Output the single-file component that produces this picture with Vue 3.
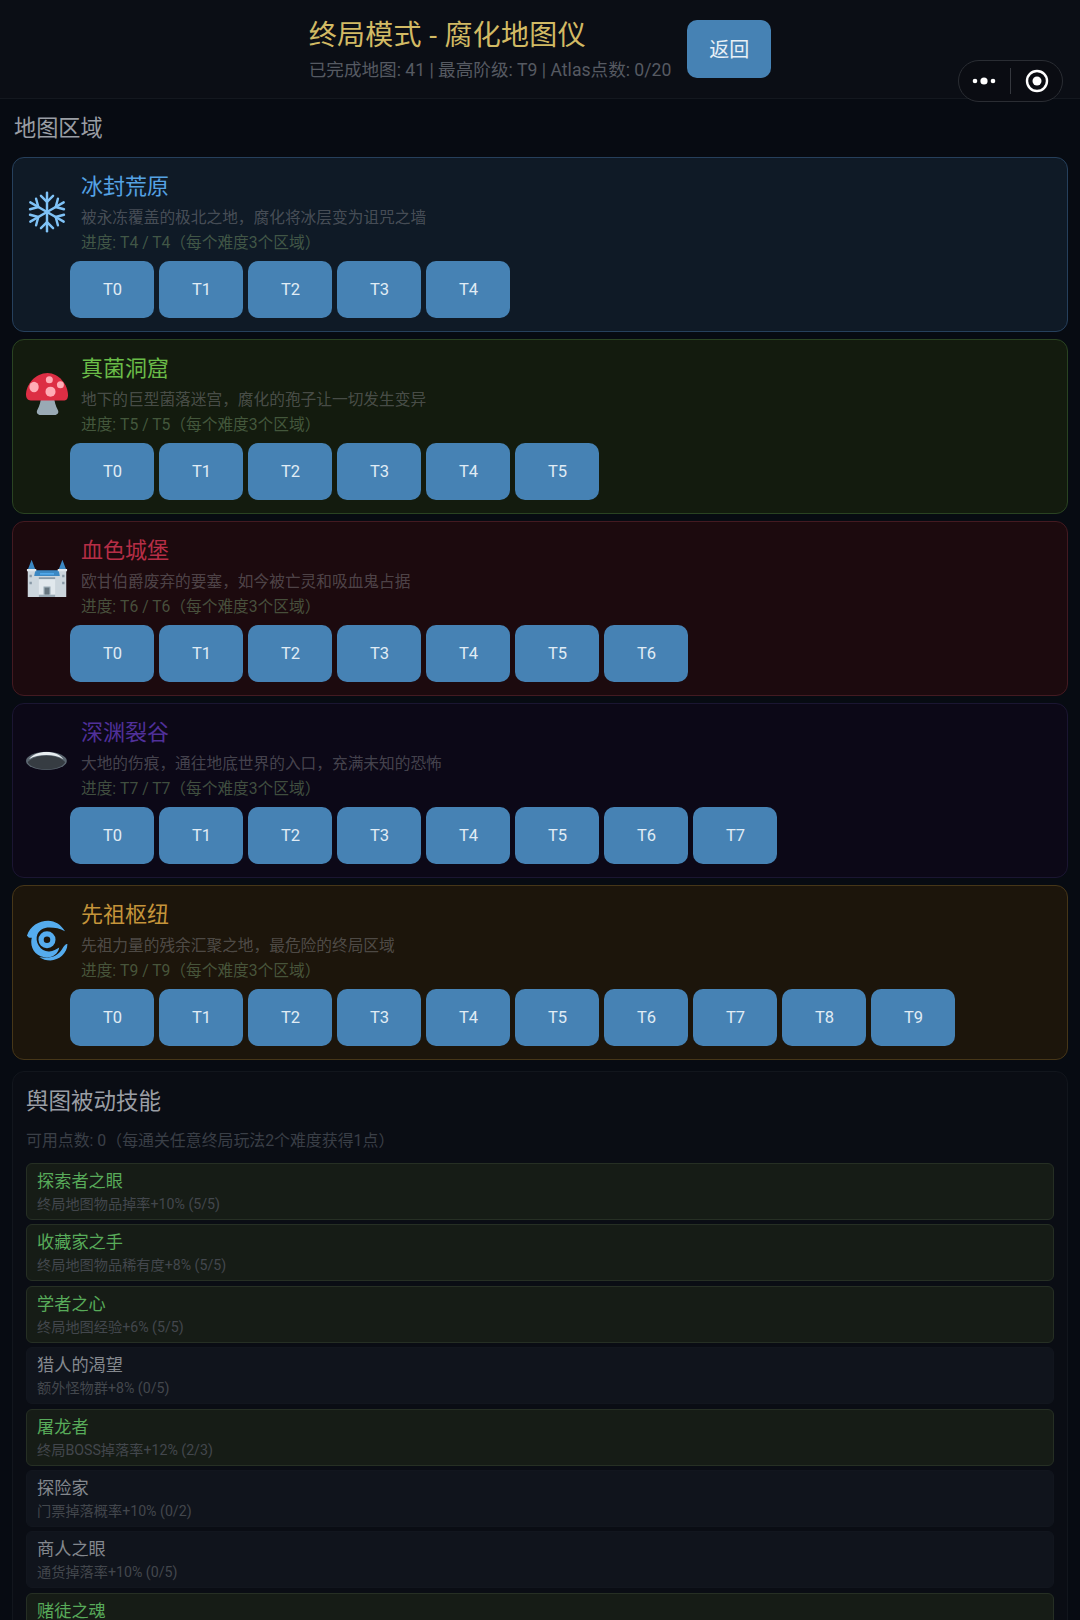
<script setup>
const regions = [
  { key: 'ice', icon: 'snow', name: '冰封荒原', desc: '被永冻覆盖的极北之地，腐化将冰层变为诅咒之墙', tier: 4 },
  { key: 'fungus', icon: 'mushroom', name: '真菌洞窟', desc: '地下的巨型菌落迷宫，腐化的孢子让一切发生变异', tier: 5 },
  { key: 'blood', icon: 'castle', name: '血色城堡', desc: '欧甘伯爵废弃的要塞，如今被亡灵和吸血鬼占据', tier: 6 },
  { key: 'abyss', icon: 'hole', name: '深渊裂谷', desc: '大地的伤痕，通往地底世界的入口，充满未知的恐怖', tier: 7 },
  { key: 'nexus', icon: 'cyclone', name: '先祖枢纽', desc: '先祖力量的残余汇聚之地，最危险的终局区域', tier: 9 },
]
const skills = [
  { name: '探索者之眼', desc: '终局地图物品掉率+10% (5/5)', on: true },
  { name: '收藏家之手', desc: '终局地图物品稀有度+8% (5/5)', on: true },
  { name: '学者之心', desc: '终局地图经验+6% (5/5)', on: true },
  { name: '猎人的渴望', desc: '额外怪物群+8% (0/5)', on: false },
  { name: '屠龙者', desc: '终局BOSS掉落率+12% (2/3)', on: true },
  { name: '探险家', desc: '门票掉落概率+10% (0/2)', on: false },
  { name: '商人之眼', desc: '通货掉落率+10% (0/5)', on: false },
  { name: '赌徒之魂', desc: '腐化奖励概率+5% (1/5)', on: true },
]
const tiers = (n) => Array.from({ length: n + 1 }, (_, i) => 'T' + i)
</script>

<template>
  <div class="page">
    <header class="top">
      <div class="top-text">
        <div class="title">终局模式 - 腐化地图仪</div>
        <div class="sub">已完成地图: 41 | 最高阶级: T9 | Atlas点数: 0/20</div>
      </div>
      <button class="back">返回</button>
      <div class="capsule">
        <svg class="dots" viewBox="0 0 24 10" width="24" height="10">
          <circle cx="3" cy="5" r="2.3" fill="#fff" />
          <circle cx="12" cy="5" r="3.6" fill="#fff" />
          <circle cx="21" cy="5" r="2.3" fill="#fff" />
        </svg>
        <span class="cap-line"></span>
        <svg viewBox="0 0 24 24" width="24" height="24">
          <circle cx="12" cy="12" r="10" fill="none" stroke="#fff" stroke-width="2.4" />
          <circle cx="12" cy="12" r="4.5" fill="#fff" />
        </svg>
      </div>
    </header>

    <main class="content">
      <h2 class="section">地图区域</h2>
      <div class="regions">
        <section v-for="r in regions" :key="r.key" class="card" :class="r.key">
          <div class="card-head">
            <div class="icon">
              <svg v-if="r.icon === 'snow'" viewBox="0 0 36 36" width="42" height="42" fill="none" stroke="#7fc2f6" stroke-width="2.1" stroke-linecap="round" stroke-linejoin="round">
                <g v-for="a in [0, 60, 120, 180, 240, 300]" :key="a" :transform="`rotate(${a} 18 18)`">
                  <path d="M18 18V1.500" />
                  <path d="M12.800 4.200 18 9.400l5.200-5.200" />
                </g>
              </svg>
              <svg v-else-if="r.icon === 'mushroom'" viewBox="0 0 36 36" width="42" height="42">
                <path fill="#99aab5" d="M13 20h11c.3 4.500 1.400 8.500 3.200 11.500C28.600 34 27 36 24.500 36h-12c-2.500 0-4.100-2-2.700-4.500C11.600 28.500 12.700 24.500 13 20z" />
                <path fill="#dd2e44" d="M18.500 0C8 0 0 10 0 18.500 0 21.500 1.500 23.500 4 23.500h29c2 0 3-2 3-4.500C36 10 28 0 18.500 0z" />
                <ellipse cx="6.900" cy="12" rx="4" ry="4.400" fill="#ffacb6" />
                <circle cx="20" cy="5.700" r="3" fill="#ffacb6" />
                <circle cx="21" cy="16" r="4.300" fill="#ffacb6" />
                <circle cx="29.500" cy="10" r="3" fill="#ffacb6" />
              </svg>
              <svg v-else-if="r.icon === 'castle'" viewBox="0 0 36 36" width="42" height="42">
                <path fill="#ccd6dd" d="M1.500 13h7v23h-7zM27.500 13h7v23h-7zM8 16h20v20H8z" />
                <path fill="#e1e8ed" d="M11 21h14v15H11z" />
                <path fill="#3b88c3" d="M4.800 4 8 12.500H1.600zM31.200 4 34.400 12.500H28zM8 13h20l1 5H7z" />
                <path fill="#e1e8ed" d="M.8 12h8v2H.8zM27.200 12h8v2h-8z" />
                <path fill="#99aab5" d="M15 27h6v7h-6z" />
                <path fill="#66757f" d="M16 28h4v6h-4z" />
                <path fill="#55acee" d="M12 15.500h12v1.300H12z" />
                <path fill="#8899a6" d="M3 17h2v2H3zM31 17h2v2h-2zM3 23h2v2H3zM31 23h2v2h-2zM11 19h14v1.500H11z" />
                <path fill="#99aab5" d="M11 34h14v2H11z" />
              </svg>
              <svg v-else-if="r.icon === 'hole'" viewBox="0 0 36 36" width="42" height="42">
                <ellipse cx="17.500" cy="20.500" rx="17.500" ry="7.800" fill="#5b6670" />
                <path fill="#363c42" d="M1.500 21.500C5 17.500 11 16 17.500 16s12.500 1.500 16 5.500c-1 3.800-8.500 6.300-16 6.300S2.500 25.300 1.500 21.500z" />
                <path fill="#e8edf0" d="M2.500 19C6 15 11 12.900 17.500 12.900S29 15 32 19c-4-2.400-9-3.500-14.500-3.500S6.500 16.600 2.500 19z" />
              </svg>
              <svg v-else viewBox="0 0 36 36" width="42" height="42">
                <path fill="#55acee" d="M.8 14.300C3.500 6 11 1.500 19 1.500c6 0 11 3.500 14.500 9-4.500-2.500-8.500-3.300-13.500-3.300-5 0-8.500 2.300-10.200 5.800-1.300 3-.8 7 1.200 10 2 3.500 5.500 5 9 4.800 3.500-.2 6-1.800 8.500-3.300-1 5.500-5.500 8.500-10.500 8.500-8 0-13.500-6-13.500-13 0-1.500.2-3 .5-4-1.500.2-3 .2-3.200-.7z" />
                <path fill="#55acee" d="M35.500 21.500c0 8-7.500 14-14.500 14-3.500 0-7-1-9.500-3 3 .5 5.500.7 8 .5 5.500-.5 10-4 12.500-9 1-1.500 2.500-3 3.500-2.500z" />
                <path fill="#55acee" fill-rule="evenodd" d="M18 10.500a7.300 7.300 0 1 0 0 14.600 7.300 7.300 0 0 0 0-14.600zm0 4.500a2.800 2.800 0 1 1 0 5.600 2.800 2.800 0 0 1 0-5.600z" />
              </svg>
            </div>
            <div class="info">
              <div class="name">{{ r.name }}</div>
              <div class="desc">{{ r.desc }}</div>
              <div class="progress">进度: T{{ r.tier }} / T{{ r.tier }}（每个难度3个区域）</div>
            </div>
          </div>
          <div class="tiers">
            <button v-for="t in tiers(r.tier)" :key="t" class="tier">{{ t }}</button>
          </div>
        </section>
      </div>

      <section class="passive">
        <h3 class="passive-title">舆图被动技能</h3>
        <div class="points">可用点数: 0（每通关任意终局玩法2个难度获得1点）</div>
        <div class="skills">
          <div v-for="s in skills" :key="s.name" class="skill" :class="{ on: s.on }">
            <div class="skill-name">{{ s.name }}</div>
            <div class="skill-desc">{{ s.desc }}</div>
          </div>
        </div>
      </section>
    </main>
  </div>
</template>

<style scoped>
.page {
  position: relative;
  width: 1080px;
  height: 1620px;
  overflow: hidden;
  background: #070b12;
  font-family: Roboto, "Noto Sans CJK SC", sans-serif;
  color: #c0c4ca;
}
.top {
  height: 97px;
  border-bottom: 1px solid #14181f;
  background: #0b0e15;
  display: flex;
  justify-content: center;
  align-items: center;
  gap: 16px;
  padding-bottom: 1px;
  box-sizing: content-box;
}
.top-text {
  padding-top: 3px;
}
.title {
  font-size: 28px;
  line-height: 36px;
  color: #d2ba64;
  letter-spacing: 0.3px;
}
.sub {
  margin-top: 4px;
  font-size: 17.600px;
  line-height: 24px;
  color: #565a62;
}
.back {
  width: 84px;
  height: 58px;
  border: 0;
  border-radius: 10px;
  background: #4682b4;
  color: #e8f0f6;
  font: inherit;
  font-size: 20px;
  padding: 0;
}
.capsule {
  position: absolute;
  left: 958px;
  top: 60px;
  width: 105px;
  height: 42px;
  box-sizing: border-box;
  border: 1.500px solid #2a2d33;
  border-radius: 21px;
  background: #0a0c12;
  display: flex;
  align-items: center;
  justify-content: center;
  gap: 14px;
}
.cap-line {
  width: 1px;
  height: 26px;
  background: #35383e;
}
.content {
  padding: 0 12px;
}
.section {
  margin: 0;
  padding-left: 2px;
  height: 58px;
  font-size: 22.200px;
  font-weight: 400;
  line-height: 58px;
  color: #9a9ea4;
}
.regions {
  display: flex;
  flex-direction: column;
  gap: 7px;
}
.card {
  height: 175px;
  box-sizing: border-box;
  border: 1px solid;
  border-radius: 12px;
  padding: 14px 13px 13px;
  display: flex;
  flex-direction: column;
  justify-content: space-between;
}
.card-head {
  display: flex;
  align-items: center;
  gap: 13px;
}
.icon {
  width: 42px;
  height: 42px;
  flex: none;
  margin-bottom: 3px;
}
.icon svg { display: block; }
.name {
  font-size: 22px;
  line-height: 30px;
}
.desc {
  margin-top: 4px;
  font-size: 15.700px;
  line-height: 24px;
  color: rgba(160, 160, 165, 0.4);
}
.progress {
  margin-top: 1px;
  font-size: 15.700px;
  line-height: 24px;
  color: rgba(110, 140, 100, 0.55);
}
.tiers {
  display: flex;
  gap: 5px;
  padding-left: 44px;
}
.tier {
  width: 84px;
  height: 57px;
  border: 0;
  border-radius: 10px;
  background: #4682b4;
  color: #e0ecf5;
  font: inherit;
  font-size: 16.500px;
  padding: 0 0 0 1px;
}
.ice { background: #0f1a26; border-color: #26405c; }
.ice .name { color: #55a2e4; }
.fungus { background: #131b0e; border-color: #2a4322; }
.fungus .name { color: #6abc48; }
.blood { background: #1c0a0e; border-color: #431a21; }
.blood .name { color: #b62e46; }
.abyss { background: #0c0817; border-color: #1b1632; }
.abyss .name { color: #50309a; }
.nexus { background: #1c150b; border-color: #463618; }
.nexus .name { color: #c4943a; }
.passive {
  margin-top: 11px;
  height: 600px;
  box-sizing: border-box;
  border: 1px solid #12161d;
  border-radius: 12px;
  background: #0a0d14;
  padding: 13px;
}
.passive-title {
  margin: 0;
  font-size: 22.500px;
  font-weight: 400;
  line-height: 32px;
  color: #9a9ea4;
}
.points {
  margin-top: 12px;
  font-size: 15.900px;
  line-height: 24px;
  color: #3a3f47;
}
.skills {
  margin-top: 10px;
  display: flex;
  flex-direction: column;
  gap: 4.400px;
}
.skill {
  height: 57px;
  flex: none;
  box-sizing: border-box;
  border: 1px solid #12161e;
  border-radius: 6px;
  background: #10141c;
  padding: 5px 10px;
}
.skill.on {
  background: #161c16;
  border-color: #262f24;
}
.skill-name {
  font-size: 17.200px;
  line-height: 24px;
  color: #84888e;
}
.skill.on .skill-name { color: #58ab5a; }
.skill-desc {
  font-size: 14.200px;
  line-height: 22px;
  color: #43474d;
}
</style>

<style>
body { background: #070b12; }
</style>
